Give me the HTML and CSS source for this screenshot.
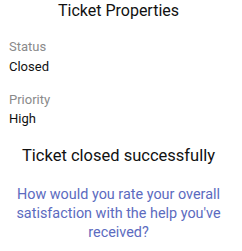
FILE: index.html
```html
<!DOCTYPE html>
<html>
<head>
<meta charset="utf-8">
<link rel="stylesheet" href="styles.css">
</head>
<body>
<div class="panel">
  <h1 class="title">Ticket Properties</h1>
  <div class="field">
    <div class="label">Status</div>
    <div class="value">Closed</div>
  </div>
  <div class="field">
    <div class="label">Priority</div>
    <div class="value">High</div>
  </div>
  <div class="done">Ticket closed successfully</div>
  <div class="question">How would you rate your overall satisfaction with the help you've received?</div>
</div>
</body>
</html>
```
FILE: styles.css
```css
html, body { margin: 0; padding: 0; background: #fff; }
body { font-family: Roboto, "Noto Sans", sans-serif; color: #111; }
.panel { padding: 0 14px 0 9px; display: flex; flex-direction: column; }
.title { margin: 0; font-size: 16px; font-weight: 400; text-align: center; line-height: 22px; }
.field { margin-top: 16px; display: flex; flex-direction: column; gap: 2.5px; }
.label { font-size: 13px; color: #8a8a8a; line-height: 17px; }
.value { font-size: 13px; color: #111; line-height: 17px; }
.done { margin-top: 18px; font-size: 16.5px; text-align: center; line-height: 22px; }
.question { margin-top: 18px; font-size: 14.4px; color: #5c6bc0; text-align: center; line-height: 19px; }
```
